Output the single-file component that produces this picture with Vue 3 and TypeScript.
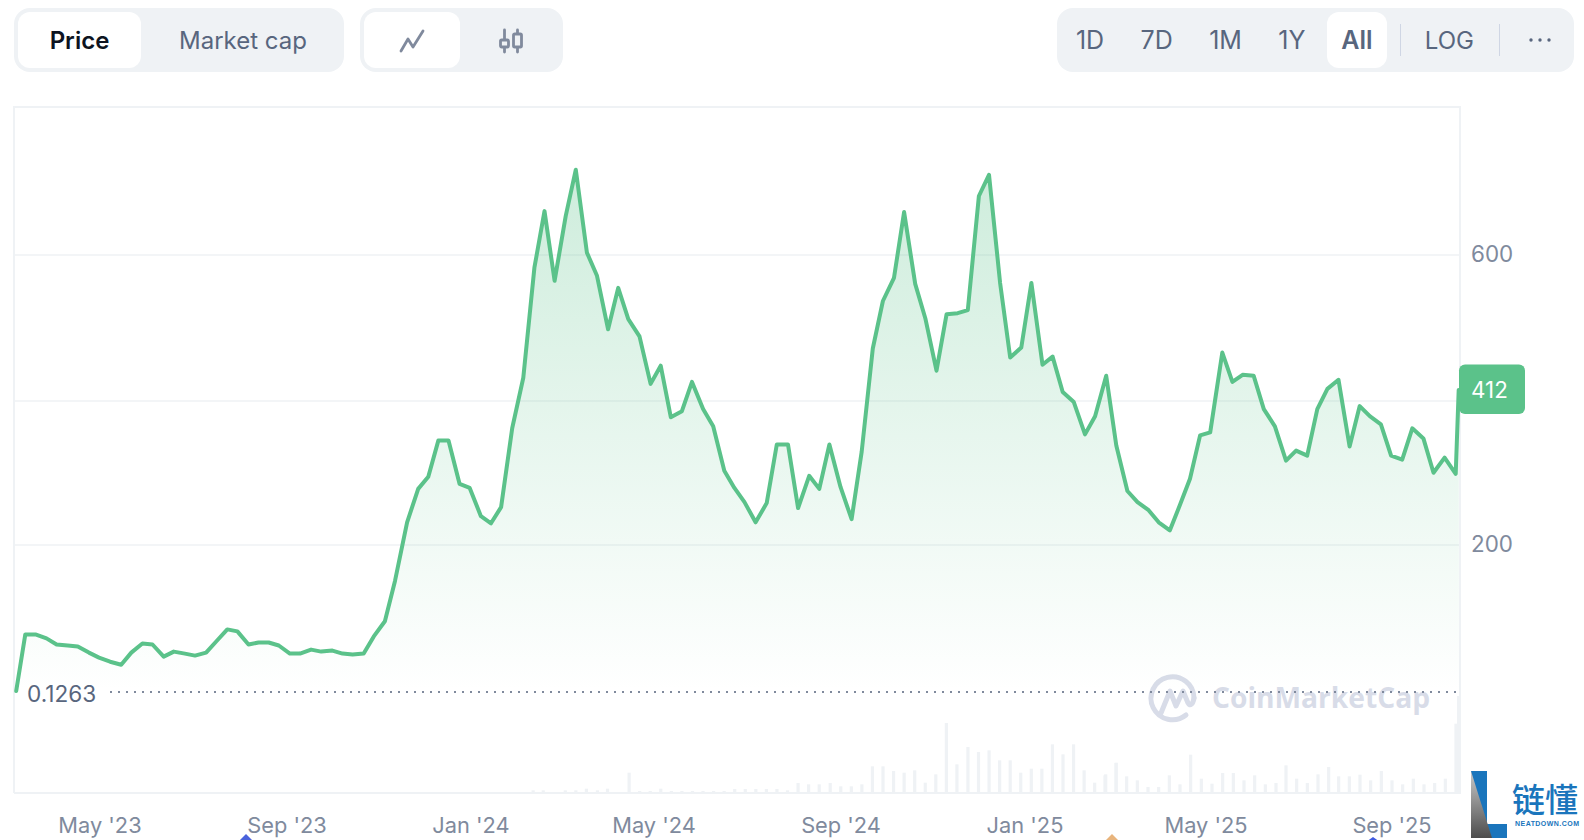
<script setup lang="ts">
const S = 1584 / 1568
const raw: number[][] = [[16,684],[25,628],[35,628],[46,632],[56,638],[67,639],[77,640],[88,646],[98,651],[109,655],[120,658],[130,646],[141,637],[151,638],[162,650],[172,645],[183,647],[193,649],[204,646],[214,635],[225,623],[235,625],[246,638],[256,636],[266,636],[276,639],[287,647],[297,647],[308,643],[318,645],[329,644],[339,647],[349,648],[360,647],[370,630],[381,615],[391,575],[403,517],[414,484],[424,472],[434,436],[444,436],[455,479],[465,483],[476,511],[486,518],[496,502],[507,424],[518,374],[529,265],[539,209],[549,278],[560,214],[570,168],[581,250],[591,273],[602,326],[612,285],[622,316],[633,333],[644,380],[654,362],[664,413],[675,407],[685,378],[696,405],[706,422],[717,466],[727,483],[737,497],[748,517],[759,498],[769,440],[780,440],[790,503],[801,471],[811,484],[821,440],[832,482],[843,514],[853,447],[864,345],[874,298],[885,275],[895,210],[906,281],[916,315],[927,367],[937,311],[948,310],[958,307],[969,194],[979,173],[990,280],[1000,354],[1011,344],[1021,280],[1032,361],[1042,353],[1052,388],[1063,398],[1074,430],[1084,412],[1095,372],[1105,441],[1116,486],[1126,497],[1137,505],[1147,517],[1158,525],[1168,500],[1178,474],[1188,431],[1198,428],[1210,349],[1220,378],[1230,371],[1241,372],[1251,405],[1262,422],[1273,456],[1283,446],[1294,451],[1304,405],[1314,385],[1325,376],[1336,442],[1346,402],[1356,412],[1367,420],[1377,451],[1388,455],[1398,424],[1409,434],[1419,468],[1430,453],[1441,469],[1444,386]]
const pts = raw.map(([x, y]) => [+(x * S).toFixed(1), +(y * S).toFixed(1)])
const line = pts.map((p) => p.join(',')).join(' ')
const area = `${line} 1459,692 16,692`

const base = 793
const midBars: number[][] = [[290,270],[312,270],[360,270],[383,270],[406,265],[430,270],[452,265],[499,217],[522,272],[545,272],[568,265],[591,272],[614,272],[637,272],[660,272],[683,272],[706,272],[729,266],[752,266],[775,266],[798,266],[821,266],[844,270],[867,248],[890,252],[913,252],[937,248],[960,258],[983,258],[1006,252],[1029,198],[1052,198],[1075,212],[1098,217],[1121,210],[1144,247],[1167,222],[1190,68],[1213,192],[1237,140],[1260,155],[1283,150],[1306,180],[1329,180],[1352,217],[1375,205],[1398,205],[1421,132],[1444,162],[1467,132],[1490,210],[1513,247],[1537,222],[1560,187]]
const endBars: number[][] = [[15,405],[48,368],[80,408],[112,420],[144,440],[176,440],[208,405],[240,432],[272,343],[304,415],[336,430],[368,398],[400,398],[432,420],[464,405],[496,432],[528,428],[558,375],[590,415],[622,428],[654,402],[686,380],[716,408],[748,408],[780,403],[812,420],[844,392],[876,420],[908,432],[940,415],[972,432],[1004,428],[1036,415],[1068,250]]
const bars = [
  ...midBars.map(([x, t]) => ({ x: 400 + x / 2.178, h: (278 - t) / 3 })),
  ...endBars.map(([x, t]) => ({ x: 1100 + x / 3, h: (458 - t) / 3 })),
]
const gridY = [255, 401, 545]
const months = [
  { t: "May '23", x: 100 },
  { t: "Sep '23", x: 287 },
  { t: "Jan '24", x: 471 },
  { t: "May '24", x: 654 },
  { t: "Sep '24", x: 841 },
  { t: "Jan '25", x: 1025 },
  { t: "May '25", x: 1206 },
  { t: "Sep '25", x: 1392 },
]
const ranges = ['1D', '7D', '1M', '1Y']
</script>

<template>
  <div class="page">
    <div class="toolbar">
      <div class="left">
        <div class="group">
          <button class="tab on price">Price</button>
          <button class="tab cap">Market cap</button>
        </div>
        <div class="group">
          <button class="tab on icon">
            <svg width="28" height="28" viewBox="0 0 28 28">
              <path class="ic" d="M3 25 L10 13 L15 21 L25 5" />
            </svg>
          </button>
          <button class="tab icon second">
            <svg width="30" height="28" viewBox="0 0 30 28">
              <path class="ic" d="M9.5 4V26M22.5 4V26" />
              <rect class="box" x="5.5" y="14" width="8" height="7" rx="1.2" />
              <rect class="box" x="18.5" y="8" width="8" height="13" rx="1.2" />
            </svg>
          </button>
        </div>
      </div>
      <div class="group right">
        <button v-for="r in ranges" :key="r" class="tab rng r">{{ r }}</button>
        <button class="tab rng on all">All</button>
        <span class="div d1"></span>
        <button class="tab rng log">LOG</button>
        <span class="div d2"></span>
        <button class="tab more">
          <svg width="26" height="8" viewBox="0 0 26 8">
            <circle cx="4" cy="4" r="1.7" /><circle cx="13" cy="4" r="1.7" /><circle cx="22" cy="4" r="1.7" />
          </svg>
        </button>
      </div>
    </div>

    <svg class="chart" width="1584" height="768" viewBox="0 72 1584 768">
      <defs>
        <linearGradient id="fill" gradientUnits="userSpaceOnUse" x1="0" y1="170" x2="0" y2="690">
          <stop offset="0" stop-color="#5bc28a" stop-opacity="0.3" />
          <stop offset="1" stop-color="#5bc28a" stop-opacity="0" />
        </linearGradient>
        <linearGradient id="lg" x1="0" y1="0" x2="0" y2="1">
          <stop offset="0" stop-color="#c9c9c9" />
          <stop offset="1" stop-color="#4d4d4d" />
        </linearGradient>
      </defs>

      <path class="frame" d="M14 793V107H1460V793H14" />
      <line v-for="y in gridY" :key="y" class="grid" x1="14" x2="1460" :y1="y" :y2="y" />

      <rect v-for="(b, i) in bars" :key="i" class="bar" :x="b.x - 1.6" :y="base - b.h" width="3.2" :height="b.h" />
      <rect class="bar" x="1457" y="696" width="3" height="97" />

      <g class="mark">
        <path d="M1186 715 A21.5 21.5 0 1 1 1194 698" />
        <path d="M1161 713 L1170 691 L1176 706 L1183 691 L1188 703 C1190 707 1193 704 1194 698" />
        <text x="1212" y="708" textLength="218" lengthAdjust="spacingAndGlyphs">CoinMarketCap</text>
      </g>

      <polygon :points="area" fill="url(#fill)" />
      <line class="dots" x1="110" x2="1458" y1="692" y2="692" />
      <polyline class="price-line" :points="line" />

      <text class="low" x="27" y="702">0.1263</text>
      <text class="yl" x="1471" y="262">600</text>
      <text class="yl" x="1471" y="552">200</text>

      <rect class="badge" x="1459" y="364.5" width="66" height="49.5" rx="6" />
      <text class="badge-t" x="1471" y="398">412</text>

      <text v-for="m in months" :key="m.t" class="xl" :x="m.x" y="833" text-anchor="middle">{{ m.t }}</text>

      <path d="M246 834 L254 842 H238 Z" fill="#4a62dc" />
      <path d="M1112 834 L1120 842 H1104 Z" fill="#e8b47c" />
      <path d="M1373 837 L1380 842 H1366 Z" fill="#3f5be0" />

      <path d="M1471 771H1487V824H1507V838H1471Z" fill="#1a75bc" />
      <path d="M1471 771L1492 838H1471Z" fill="url(#lg)" />
      <text class="cn" x="1512" y="812">链懂</text>
      <text class="nd" x="1515" y="826" textLength="64">NEATDOWN.COM</text>
    </svg>
  </div>
</template>

<style>
html, body { margin: 0; background: #fff; overflow: hidden; }
</style>

<style scoped>
.page {
  width: 1584px;
  height: 840px;
  background: #fff;
  font-family: Inter, "Liberation Sans", sans-serif;
}
.toolbar {
  display: flex;
  justify-content: space-between;
  align-items: flex-start;
  height: 72px;
  padding: 8px 10px 0 14px;
  box-sizing: border-box;
}
.left { display: flex; gap: 16px; }
.group {
  display: flex;
  align-items: center;
  height: 64px;
  padding: 4px;
  box-sizing: border-box;
  background: #eff2f5;
  border-radius: 16px;
}
.tab {
  height: 56px;
  border: 0;
  background: transparent;
  border-radius: 12px;
  color: #58667e;
  font: 400 24px Inter, "Liberation Sans", sans-serif;
  display: flex;
  align-items: center;
  justify-content: center;
  padding: 0;
}
.tab.on { background: #fff; }
.price { width: 123px; color: #0d1421; font-weight: 600; }
.cap { width: 199px; padding-left: 5px; box-sizing: border-box; }
.icon { width: 96px; }
.second { width: 99px; }
.right { gap: 6px; }
.rng { padding: 0 15px; box-sizing: border-box; }
.r { font-size: 25px; margin-right: 0.4px; }
.all { font-weight: 600; width: 60px; padding: 0; font-size: 25px; }
.div { width: 1px; height: 32px; background: #cfd6e4; }
.d1 { margin: 0 3px 0 7px; }
.d2 { margin: 0 4px 0 4px; }
.more { width: 60px; }
.more circle { fill: #58667e; }
.ic { fill: none; stroke: #808a9d; stroke-width: 2.8; stroke-linecap: round; stroke-linejoin: round; }
.box { fill: #eff2f5; stroke: #808a9d; stroke-width: 2.8; }

.chart { display: block; }
.frame { fill: none; stroke: #eff2f5; stroke-width: 2; }
.grid { stroke: #eff2f5; stroke-width: 1.6; }
.bar { fill: #eff2f5; }
.dots { stroke: #808a9d; stroke-width: 2; stroke-dasharray: 2 6; }
.price-line { fill: none; stroke: #5bc28a; stroke-width: 4; stroke-linejoin: round; stroke-linecap: round; }
.mark path { fill: none; stroke: #d8dce8; stroke-width: 5; stroke-linecap: round; stroke-linejoin: round; }
.mark text { fill: #d8dce8; font: 700 28px "Open Sans", sans-serif; }
.low { fill: #58667e; font: 400 22.6px Inter, sans-serif; }
.yl { fill: #808a9d; font: 400 22.4px Inter, sans-serif; }
.xl { fill: #808a9d; font: 400 21.8px Inter, sans-serif; }
.badge { fill: #5bc28a; }
.badge-t { fill: #fff; font: 400 22.4px Inter, sans-serif; }
.cn { fill: #1a75bc; font: 500 33px "Noto Sans CJK SC", sans-serif; }
.nd { fill: #1a75bc; font: 700 7px "Liberation Sans", sans-serif; }
</style>
